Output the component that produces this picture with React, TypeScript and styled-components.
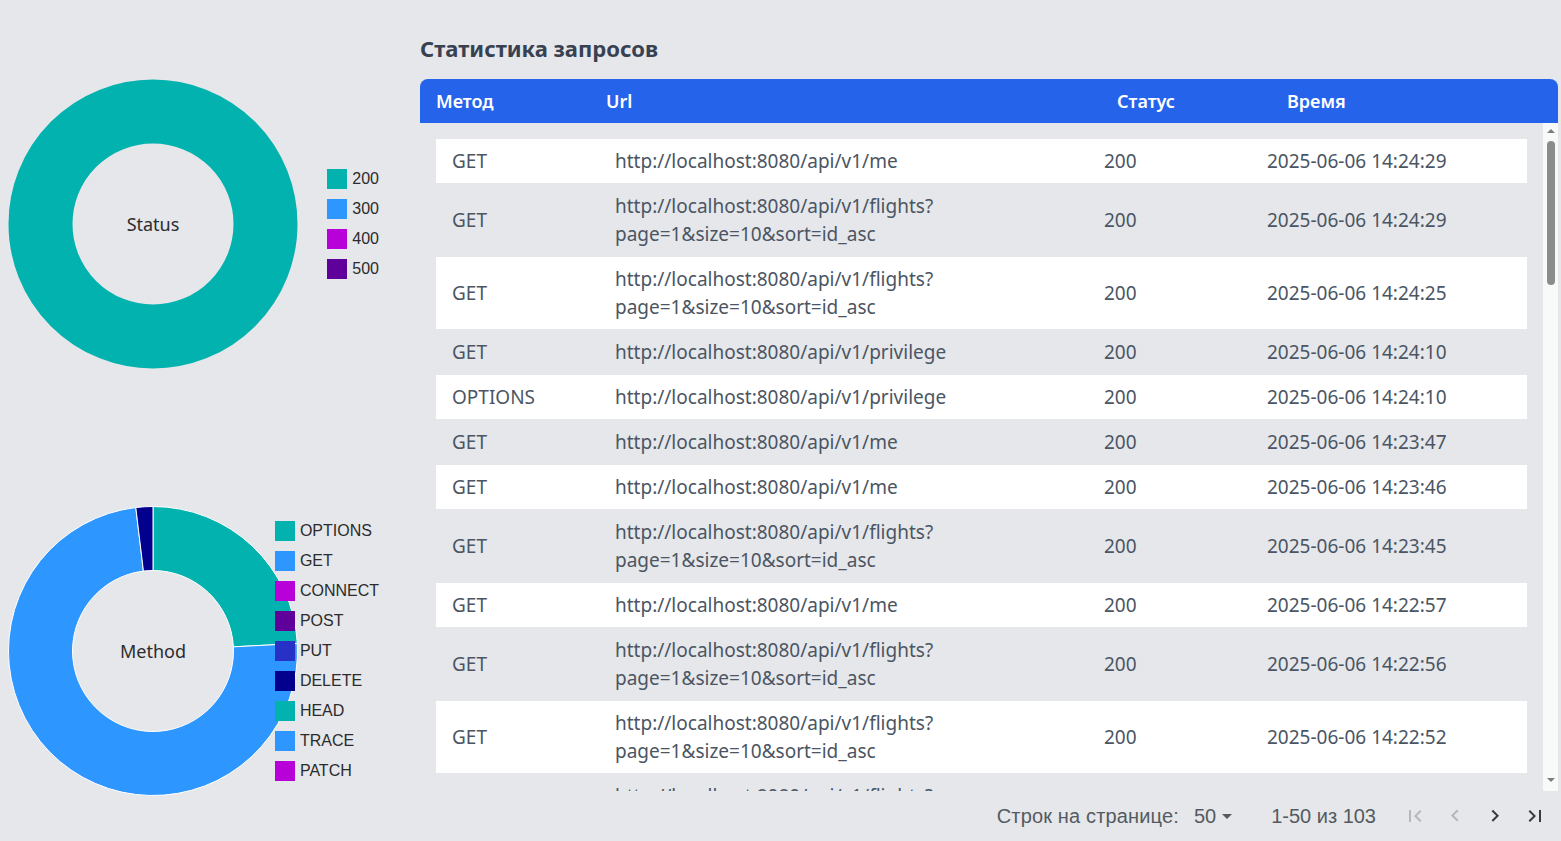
import React from "react";
import styled, { createGlobalStyle } from "styled-components";

const GlobalStyle = createGlobalStyle`
  html, body {
    margin: 0;
    padding: 0;
    background: #e5e7eb;
  }
  body {
    font-family: "Noto Sans", "Open Sans", sans-serif;
    overflow: hidden;
  }
`;

const Page = styled.div`
  display: flex;
  width: 1561px;
  height: 841px;
  background: #e5e7eb;
  overflow: hidden;
`;

const ChartsColumn = styled.div`
  width: 420px;
  flex: none;
  box-sizing: border-box;
  padding: 79px 0 0 8px;
  display: flex;
  flex-direction: column;
  gap: 137px;
`;

const ChartBlock = styled.div`
  display: grid;
  width: 371px;
  height: 290px;
  & > * {
    grid-area: 1 / 1;
  }
`;

const DonutSvg = styled.svg`
  width: 290px;
  height: 290px;
  display: block;
`;

const Legend = styled.ul`
  list-style: none;
  margin: 0;
  padding: 0;
  justify-self: end;
  align-self: center;
  display: flex;
  flex-direction: column;
  gap: 10px;
`;

const LegendItem = styled.li`
  display: flex;
  align-items: center;
  gap: 5px;
  height: 20px;
  font-family: "Liberation Sans", Arial, sans-serif;
  font-size: 16px;
  color: #2b2b2b;
`;

const Swatch = styled.span<{ $color: string }>`
  width: 20px;
  height: 20px;
  background: ${(p) => p.$color};
  flex: none;
`;

const StatsPanel = styled.div`
  flex: 1;
  min-width: 0;
  margin-right: 3px;
  display: flex;
  flex-direction: column;
`;

const Title = styled.h2`
  margin: 0 0 14px 0;
  padding-top: 31px;
  line-height: 34px;
  font-size: 22px;
  font-weight: 700;
  color: #374151;
`;

const TableCard = styled.div`
  display: flex;
  flex-direction: column;
`;

const HeaderRow = styled.div`
  display: grid;
  grid-template-columns: 170px 511px 170px 1fr;
  align-items: center;
  height: 44px;
  padding-left: 16px;
  background: #2563eb;
  border-radius: 8px 8px 0 0;
  color: #ffffff;
  font-size: 18px;
  font-weight: 600;
`;

const BodyFrame = styled.div`
  display: flex;
  height: 668px;
`;

const ScrollBody = styled.div`
  flex: 1;
  min-width: 0;
  overflow: hidden;
  padding: 16px 16px 0 16px;
`;

const ScrollTrack = styled.div`
  width: 15px;
  flex: none;
  background: #f9f9f9;
  display: flex;
  flex-direction: column;
  align-items: center;
  padding-bottom: 3px;
  box-sizing: border-box;
`;

const ArrowBox = styled.div`
  height: 16px;
  width: 15px;
  display: flex;
  align-items: center;
  justify-content: center;
  flex: none;
`;

const Triangle = styled.span<{ $dir: "up" | "down" }>`
  width: 0;
  height: 0;
  border-left: 4px solid transparent;
  border-right: 4px solid transparent;
  ${(p) =>
    p.$dir === "up"
      ? "border-bottom: 4px solid #7c7c7c;"
      : "border-top: 4px solid #7c7c7c;"}
`;

const Thumb = styled.div`
  width: 8px;
  height: 144px;
  margin-top: 2px;
  border-radius: 4px;
  background: #8b8b8b;
  flex: none;
`;

const TrackSpacer = styled.div`
  flex: 1;
`;

const BodyRow = styled.div<{ $striped: boolean }>`
  display: grid;
  grid-template-columns: 163px 489px 163px 1fr;
  align-items: center;
  padding: ${(p) => (p.$striped ? "9px 0 9px 16px" : "8px 0 8px 16px")};
  background: ${(p) => (p.$striped ? "transparent" : "#ffffff")};
  font-size: 19px;
  line-height: 28px;
  color: #4b5563;
`;

const Cell = styled.div`
  min-width: 0;
`;

const Pagination = styled.div`
  height: 50px;
  display: flex;
  align-items: center;
  justify-content: flex-end;
  padding-right: 3px;
  font-family: "Liberation Sans", Arial, sans-serif;
  font-size: 20px;
  color: #555a60;
`;

const RowsLabel = styled.span`
  margin-right: 15px;
  letter-spacing: 0.15px;
`;

const RowsSelect = styled.span`
  display: flex;
  align-items: center;
  margin-right: 32px;
`;

const Range = styled.span`
  margin-right: 19px;
`;

const PageButton = styled.button<{ $disabled?: boolean }>`
  width: 40px;
  height: 40px;
  border: none;
  background: transparent;
  padding: 0;
  display: flex;
  align-items: center;
  justify-content: center;
  color: ${(p) => (p.$disabled ? "#b4b7bc" : "#3a3a3a")};
  cursor: ${(p) => (p.$disabled ? "default" : "pointer")};
`;

const Icon = styled.svg`
  width: 24px;
  height: 24px;
  fill: currentColor;
`;

const Caret = styled.svg`
  width: 24px;
  height: 24px;
  margin-left: -1px;
  fill: #555a60;
`;

type Slice = { label: string; value: number; color: string };

const CX = 145;
const CY = 145;
const R_OUT = 144.5;
const R_IN = 80.5;

function pt(r: number, deg: number) {
  const a = ((deg - 90) * Math.PI) / 180;
  return [CX + r * Math.cos(a), CY + r * Math.sin(a)];
}

function arcPath(a0: number, a1: number) {
  const large = a1 - a0 > 180 ? 1 : 0;
  const [x0, y0] = pt(R_OUT, a0);
  const [x1, y1] = pt(R_OUT, a1);
  const [x2, y2] = pt(R_IN, a1);
  const [x3, y3] = pt(R_IN, a0);
  return `M${x0} ${y0} A${R_OUT} ${R_OUT} 0 ${large} 1 ${x1} ${y1} L${x2} ${y2} A${R_IN} ${R_IN} 0 ${large} 0 ${x3} ${y3} Z`;
}

const Donut: React.FC<{ slices: Slice[]; label: string }> = ({ slices, label }) => {
  const total = slices.reduce((s, x) => s + x.value, 0);
  let acc = 0;
  const shown = slices.filter((s) => s.value > 0);
  return (
    <DonutSvg viewBox="0 0 290 290">
      {shown.length === 1 ? (
        <circle
          cx={CX}
          cy={CY}
          r={(R_OUT + R_IN) / 2}
          fill="none"
          stroke={shown[0].color}
          strokeWidth={R_OUT - R_IN}
        />
      ) : (
        shown.map((s) => {
          const a0 = (acc / total) * 360;
          acc += s.value;
          const a1 = (acc / total) * 360;
          return <path key={s.label} d={arcPath(a0, a1)} fill={s.color} stroke="#ffffff" strokeWidth={1} />;
        })
      )}
      <text
        x={CX}
        y={CY + 2}
        textAnchor="middle"
        dominantBaseline="middle"
        fontFamily='"Noto Sans", sans-serif'
        fontSize="18"
        fill="#2d2d2d"
      >
        {label}
      </text>
    </DonutSvg>
  );
};

const C1 = "#02B2AF";
const C2 = "#2E96FF";
const C3 = "#B800D8";
const C4 = "#60009B";
const C5 = "#2731C8";
const C6 = "#03008D";

const statusSlices: Slice[] = [
  { label: "200", value: 103, color: C1 },
  { label: "300", value: 0, color: C2 },
  { label: "400", value: 0, color: C3 },
  { label: "500", value: 0, color: C4 },
];

const methodSlices: Slice[] = [
  { label: "OPTIONS", value: 24.2, color: C1 },
  { label: "GET", value: 74.0, color: C2 },
  { label: "CONNECT", value: 0, color: C3 },
  { label: "POST", value: 0, color: C4 },
  { label: "PUT", value: 0, color: C5 },
  { label: "DELETE", value: 1.9, color: C6 },
  { label: "HEAD", value: 0, color: C1 },
  { label: "TRACE", value: 0, color: C2 },
  { label: "PATCH", value: 0, color: C3 },
];

const ME = "http://localhost:8080/api/v1/me";
const FL = "http://localhost:8080/api/v1/flights?page=1&size=10&sort=id_asc";
const PR = "http://localhost:8080/api/v1/privilege";
const TK = "http://localhost:8080/api/v1/tickets";

type Req = { method: string; url: string; time: string };

const head: Req[] = [
  { method: "GET", url: ME, time: "14:24:29" },
  { method: "GET", url: FL, time: "14:24:29" },
  { method: "GET", url: FL, time: "14:24:25" },
  { method: "GET", url: PR, time: "14:24:10" },
  { method: "OPTIONS", url: PR, time: "14:24:10" },
  { method: "GET", url: ME, time: "14:23:47" },
  { method: "GET", url: ME, time: "14:23:46" },
  { method: "GET", url: FL, time: "14:23:45" },
  { method: "GET", url: ME, time: "14:22:57" },
  { method: "GET", url: FL, time: "14:22:56" },
  { method: "GET", url: FL, time: "14:22:52" },
  { method: "GET", url: FL, time: "14:22:50" },
];

const tailPattern: [string, string][] = [
  ["OPTIONS", TK],
  ["GET", TK],
  ["GET", ME],
  ["OPTIONS", PR],
  ["GET", PR],
  ["GET", FL],
];

const requests: Req[] = [...head];
for (let i = 0; requests.length < 50; i++) {
  const [m, u] = tailPattern[i % tailPattern.length];
  const sec = 2 * 60 + 48 - i * 3;
  const mm = 20 + Math.floor(sec / 60);
  const ss = ((sec % 60) + 60) % 60;
  requests.push({ method: m, url: u, time: `14:${mm}:${String(ss).padStart(2, "0")}` });
}

const UrlText: React.FC<{ url: string }> = ({ url }) => {
  const q = url.indexOf("?");
  if (q < 0) return <>{url}</>;
  return (
    <>
      {url.slice(0, q + 1)}
      <wbr />
      {url.slice(q + 1)}
    </>
  );
};

const FirstPageIcon = () => (
  <Icon viewBox="0 0 24 24">
    <path d="M18.41 16.59L13.82 12l4.59-4.59L17 6l-6 6 6 6zM6 6h2v12H6z" />
  </Icon>
);
const PrevIcon = () => (
  <Icon viewBox="0 0 24 24">
    <path d="M15.41 16.09l-4.59-4.59 4.59-4.59L14 5.5l-6 6 6 6z" />
  </Icon>
);
const NextIcon = () => (
  <Icon viewBox="0 0 24 24">
    <path d="M8.59 16.34l4.59-4.59-4.59-4.59L10 5.75l6 6-6 6z" />
  </Icon>
);
const LastPageIcon = () => (
  <Icon viewBox="0 0 24 24">
    <path d="M5.59 7.41L10.18 12l-4.59 4.59L7 18l6-6-6-6zM16 6h2v12h-2z" />
  </Icon>
);

export default function App() {
  return (
    <>
      <GlobalStyle />
      <Page>
        <ChartsColumn>
          <ChartBlock>
            <Donut slices={statusSlices} label="Status" />
            <Legend>
              {statusSlices.map((s) => (
                <LegendItem key={s.label}>
                  <Swatch $color={s.color} />
                  {s.label}
                </LegendItem>
              ))}
            </Legend>
          </ChartBlock>
          <ChartBlock>
            <Donut slices={methodSlices} label="Method" />
            <Legend>
              {methodSlices.map((s) => (
                <LegendItem key={s.label}>
                  <Swatch $color={s.color} />
                  {s.label}
                </LegendItem>
              ))}
            </Legend>
          </ChartBlock>
        </ChartsColumn>
        <StatsPanel>
          <Title>Статистика запросов</Title>
          <TableCard>
            <HeaderRow>
              <div>Метод</div>
              <div>Url</div>
              <div>Статус</div>
              <div>Время</div>
            </HeaderRow>
            <BodyFrame>
              <ScrollBody>
                {requests.map((r, i) => (
                  <BodyRow key={i} $striped={i % 2 === 1}>
                    <Cell>{r.method}</Cell>
                    <Cell>
                      <UrlText url={r.url} />
                    </Cell>
                    <Cell>200</Cell>
                    <Cell>2025-06-06 {r.time}</Cell>
                  </BodyRow>
                ))}
              </ScrollBody>
              <ScrollTrack>
                <ArrowBox>
                  <Triangle $dir="up" />
                </ArrowBox>
                <Thumb />
                <TrackSpacer />
                <ArrowBox>
                  <Triangle $dir="down" />
                </ArrowBox>
              </ScrollTrack>
            </BodyFrame>
          </TableCard>
          <Pagination>
            <RowsLabel>Строк на странице:</RowsLabel>
            <RowsSelect>
              50
              <Caret viewBox="0 0 24 24">
                <path d="M7 10l5 5 5-5z" />
              </Caret>
            </RowsSelect>
            <Range>1-50 из 103</Range>
            <PageButton $disabled aria-label="first page">
              <FirstPageIcon />
            </PageButton>
            <PageButton $disabled aria-label="previous page">
              <PrevIcon />
            </PageButton>
            <PageButton aria-label="next page">
              <NextIcon />
            </PageButton>
            <PageButton aria-label="last page">
              <LastPageIcon />
            </PageButton>
          </Pagination>
        </StatsPanel>
      </Page>
    </>
  );
}
